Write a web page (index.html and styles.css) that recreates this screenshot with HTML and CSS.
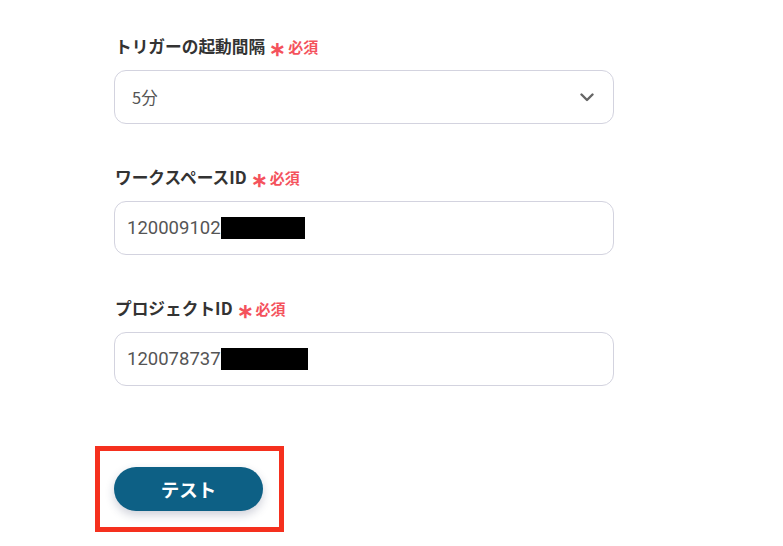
FILE: index.html
```html
<!DOCTYPE html>
<html lang="ja">
<head>
<meta charset="utf-8">
<link rel="stylesheet" href="styles.css">
</head>
<body>
<main class="form">
  <div class="field">
    <label class="label">トリガーの起動間隔<span class="req"><span class="ast">∗</span>必須</span></label>
    <div class="box select">
      <span class="value sel-value">5分</span>
      <svg class="chev" width="14" height="9" viewBox="0 0 14 9"><path d="M1.5 1.5 L7 7 L12.5 1.5" fill="none" stroke="#666" stroke-width="2.4" stroke-linecap="round" stroke-linejoin="round"/></svg>
    </div>
  </div>
  <div class="field">
    <label class="label">ワークスペースID<span class="req"><span class="ast">∗</span>必須</span></label>
    <div class="box input">
      <span class="value">120009102</span><span class="mask m1"></span>
    </div>
  </div>
  <div class="field">
    <label class="label">プロジェクトID<span class="req"><span class="ast">∗</span>必須</span></label>
    <div class="box input">
      <span class="value">120078737</span><span class="mask m2"></span>
    </div>
  </div>
  <div class="actions">
    <div class="highlight">
      <button class="btn">テスト</button>
    </div>
  </div>
</main>
</body>
</html>
```

FILE: styles.css
```css
* { box-sizing: border-box; }
html, body { margin: 0; padding: 0; background: #ffffff; }
body {
  font-family: "Noto Sans CJK JP", "Noto Sans", sans-serif;
  color: #333;
}
.form {
  width: 783px;
  height: 546px;
  padding: 34px 0 0 114px;
  overflow: hidden;
}
.field {
  width: 500px;
  margin-bottom: 41px;
}
.label {
  display: flex;
  align-items: center;
  height: 24px;
  font-size: 16.7px;
  font-weight: 700;
  color: #333;
  padding-left: 1px;
  margin-bottom: 12px;
}
.req {
  display: inline-flex;
  align-items: center;
  color: #f4525c;
  font-size: 15px;
  font-weight: 700;
  margin-left: 4px;
}
.ast {
  font-size: 20px;
  font-weight: 700;
  margin-right: 2px;
  line-height: 1;
  position: relative;
  top: 2px;
}
.box {
  height: 54px;
  border: 1px solid #d3d3df;
  border-radius: 12px;
  display: flex;
  align-items: center;
  background: #fff;
}
.select {
  padding: 0 19px 0 17px;
  justify-content: space-between;
}
.input {
  padding: 0 12px;
}
.value {
  font-family: Roboto, "Noto Sans CJK JP", sans-serif;
  font-size: 18.5px;
  color: #555;
}
.sel-value {
  font-family: "Noto Sans CJK JP", sans-serif;
  font-size: 16.5px;
}
.chev { display: block; }
.mask {
  display: inline-block;
  height: 22px;
  background: #000;
}
.m1 { width: 84px; }
.m2 { width: 87px; }
.actions {
  padding-top: 19px;
  margin-left: -19px;
}
.highlight {
  width: 189px;
  height: 86px;
  border: 5px solid #f5301e;
  padding: 16px 0 0 14px;
}
.btn {
  width: 149px;
  height: 44px;
  border: none;
  border-radius: 22px;
  background: #0d6085;
  color: #fff;
  font-family: "Noto Sans CJK JP", sans-serif;
  font-size: 18.5px;
  font-weight: 700;
  box-shadow: 0 4px 10px rgba(30, 40, 80, 0.22);
  padding: 0;
  cursor: pointer;
}
```
